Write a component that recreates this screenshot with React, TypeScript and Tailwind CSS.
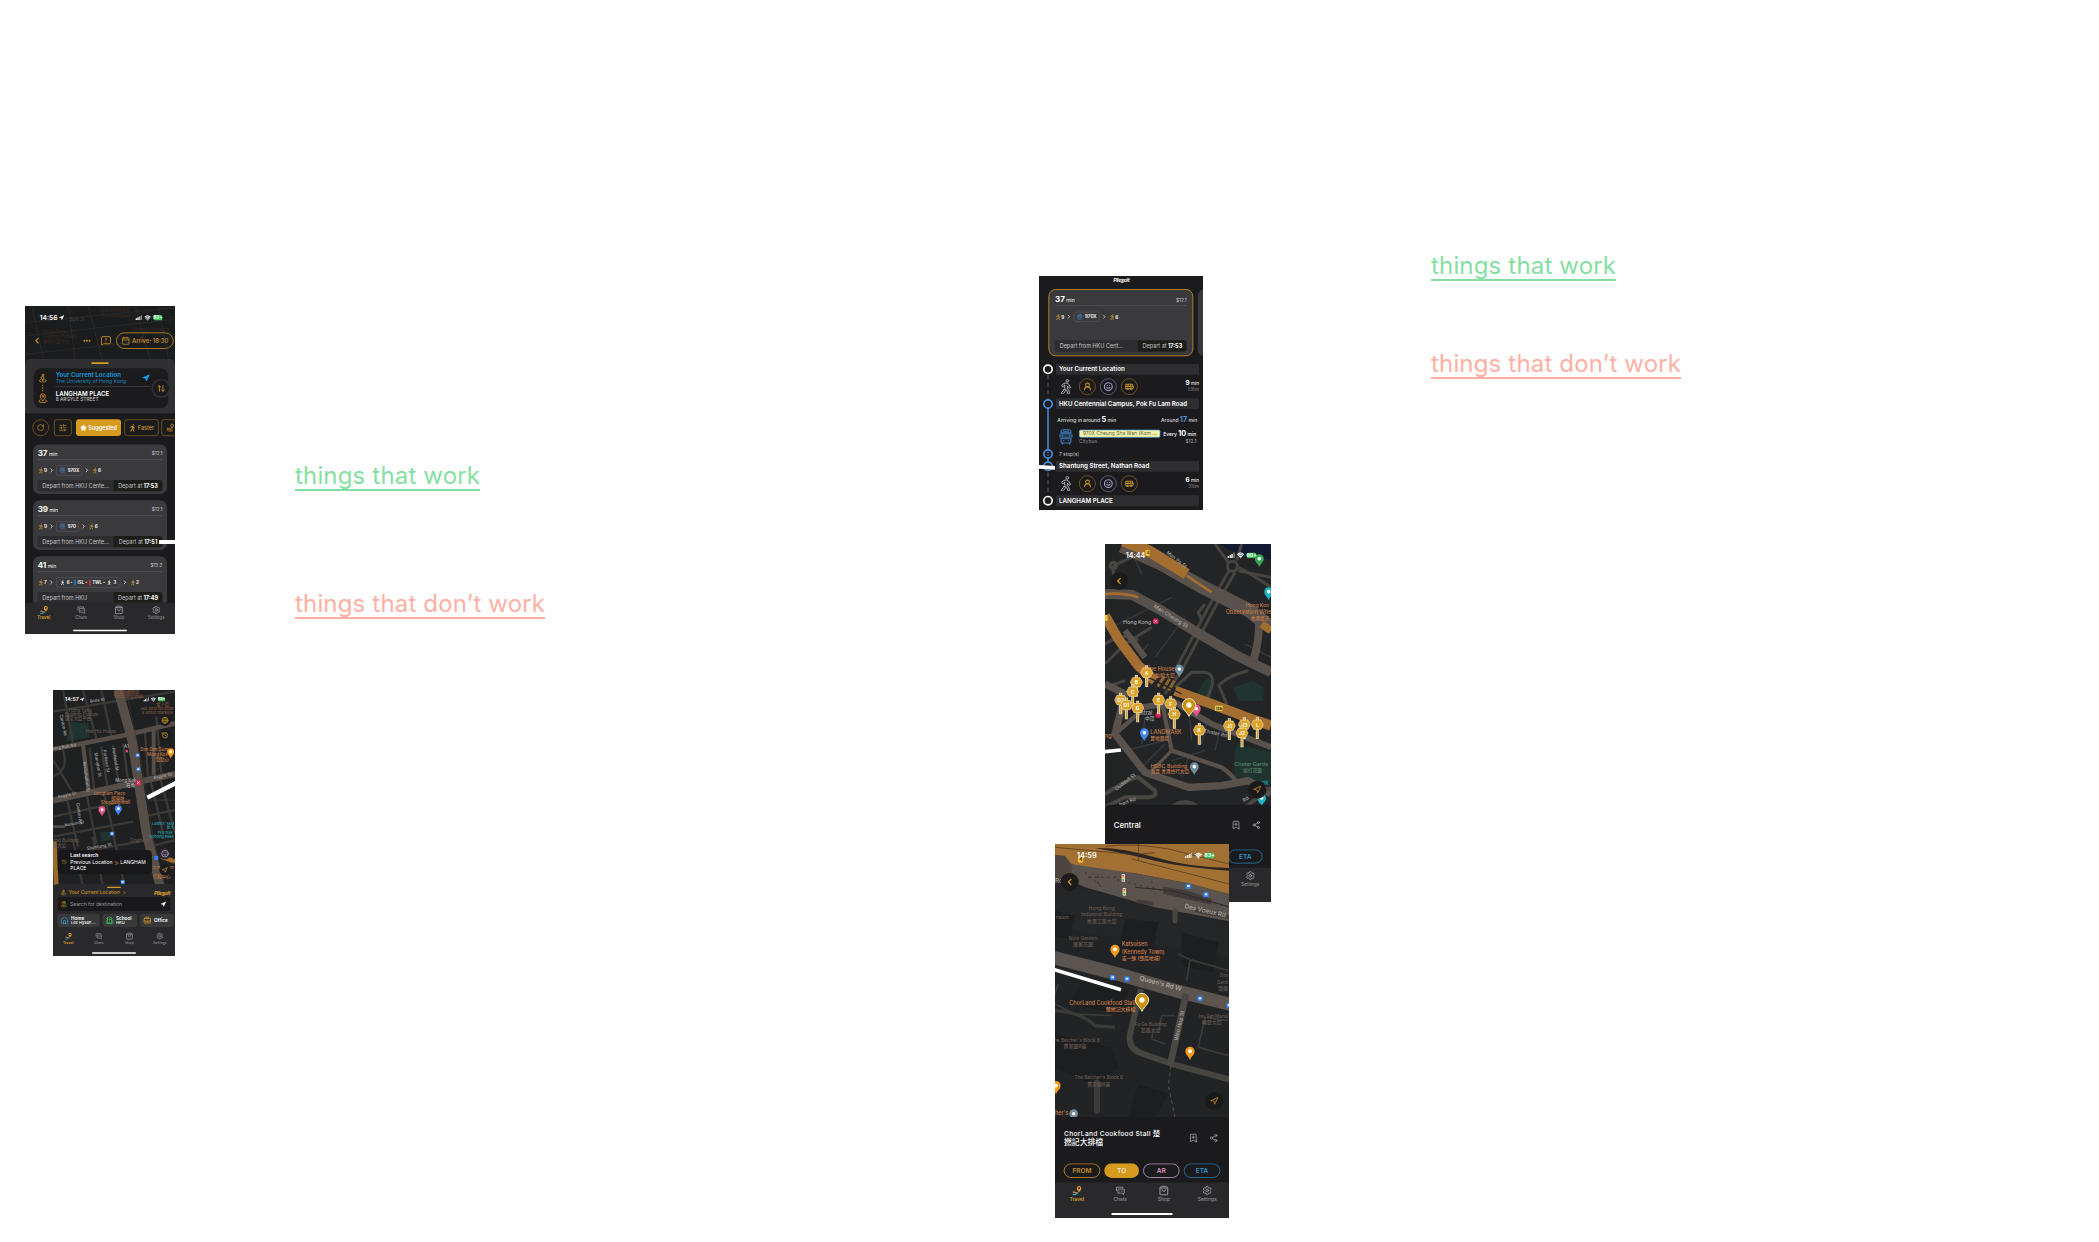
import React from "react";
import {
  ArrowRightLeft, BookmarkPlus, BriefcaseBusiness, Calendar, ChevronLeft, ChevronRight, Ellipsis,
  Globe, History, House, MessageSquareWarning, MessagesSquare, Navigation, RotateCw, School, Settings, Share2,
  ShoppingBag, SlidersHorizontal, Smile, Star, Wifi, Bus, UserRound,
} from "lucide-react";
import { FaWalking } from "react-icons/fa";

const FONT = "font-['Inter','Noto_Sans_CJK_TC',sans-serif]";

function Note({ className, children }: { className: string; children: React.ReactNode }) {
  return (
    <p className={`absolute whitespace-nowrap border-b-2 text-[24px] leading-[26px] font-[370] tracking-[0.17px] ${className}`}>
      {children}
    </p>
  );
}

function StatusBar({ time, battery, className, arrow = false }: { time: string; battery: string; className: string; arrow?: boolean }) {
  return (
    <div className={`flex h-[3.5em] items-center justify-between text-white ${className}`}>
      <div className="flex items-center gap-[0.2em] font-semibold">
        {time}
        {arrow && <Navigation className="size-[0.8em]" fill="currentColor" />}
      </div>
      <div className="flex items-center gap-[0.35em]">
        <div className="flex items-end gap-[0.08em]">
          <i className="h-[0.25em] w-[0.18em] bg-white" />
          <i className="h-[0.4em] w-[0.18em] bg-white" />
          <i className="h-[0.55em] w-[0.18em] bg-white" />
          <i className="h-[0.7em] w-[0.18em] bg-white/50" />
        </div>
        <Wifi className="size-[1em]" strokeWidth={3.6} />
        <div className="flex h-[0.8em] w-[1.4em] items-center justify-center rounded-[0.25em] bg-[#35c759] text-[0.95em] font-bold">
          <span className="text-[0.75em]">{battery}</span>
        </div>
      </div>
    </div>
  );
}

function TravelIcon() {
  return (
    <svg viewBox="0 0 28 28" className="size-[2.1em]" fill="none">
      <path d="M3 19q3-3 6 0t6 0" stroke="#e0a526" strokeWidth="3.2" />
      <path d="M3 25h6q3 0 4-2.500t5-2" stroke="#2ba9c4" strokeWidth="3.2" />
      <path d="M20 19c-4-5-6-7-6-11a6 6 0 0 1 12 0c0 4-2 6-6 11z" fill="#dfa02a" />
      <circle cx="20" cy="8" r="2.8" fill="#29292b" />
    </svg>
  );
}

function ChatsIcon() {
  return (
    <svg viewBox="0 0 28 28" className="size-[2.1em]" fill="none" stroke="currentColor" strokeWidth="2.2" strokeLinejoin="round">
      <path d="M4 16V5h17v3" />
      <path d="M8 10h17v11h-2v4l-4-4H8z" />
      <path d="M12 15.500h2M16 15.500h2M20 15.500h2" />
    </svg>
  );
}

function BottomNav({ className }: { className: string }) {
  return (
    <nav className={`flex h-[7.2em] shrink-0 flex-col justify-between bg-[#29292b] pt-[0.6em] pb-[0.62em] text-[#9d9da1] ${className}`}>
      <div className="grid grid-cols-4 leading-[1.5em]">
        <div className="flex flex-col items-center font-semibold text-[#d79c24]"><TravelIcon />Travel</div>
        <div className="flex flex-col items-center"><ChatsIcon />Chats</div>
        <div className="flex flex-col items-center"><ShoppingBag className="size-[2.1em]" strokeWidth={2.3} />Shop</div>
        <div className="flex flex-col items-center"><Settings className="size-[2.1em]" strokeWidth={2.1} />Settings</div>
      </div>
      <div className="mx-auto h-[0.42em] w-[12.4em] rounded-full bg-white" />
    </nav>
  );
}

function OriginIcon({ className }: { className: string }) {
  return (
    <svg viewBox="0 0 28 28" className={className} fill="none" stroke="currentColor" strokeWidth="2.4" strokeLinecap="round" strokeLinejoin="round">
      <circle cx="14" cy="4.5" r="2.8" />
      <path d="M10.5 10h7l-1 6h-1l-.5 5h-2l-.5-5h-1z" />
      <path d="M8 18c-7 2-6 7 6 7s13-5 6-7" />
    </svg>
  );
}

function TargetIcon({ className }: { className: string }) {
  return (
    <svg viewBox="0 0 28 28" className={className} fill="none" stroke="currentColor" strokeWidth="2.4" strokeLinecap="round" strokeLinejoin="round">
      <path d="M14 21c-5-6-7-8-7-12a7 7 0 0 1 14 0c0 4-2 6-7 12z" />
      <circle cx="14" cy="9" r="2.3" />
      <path d="M7 19c-7 2-5 7 7 7s14-5 7-7" />
    </svg>
  );
}

function BusFront({ className }: { className: string }) {
  return (
    <svg viewBox="0 0 40 48" className={className} fill="none" stroke="currentColor" strokeWidth="3.2">
      <path d="M9 42V47M31 42V47M1 16v9M39 16v9" />
      <rect x="5" y="2" width="30" height="40" rx="6" />
      <path d="M5 11H35M5 29H35M11 6.500H29" />
      <rect x="9" y="14" width="22" height="11" fill="currentColor" fillOpacity="0.35" strokeWidth="2" />
      <path d="M10 35h5M25 35h5" />
    </svg>
  );
}

function Walk({ n }: { n: string }) {
  return (
    <span className="flex items-center">
      <FaWalking className="size-[19px] text-[#b8872a]" />
      <b className="text-[14px]">{n}</b>
    </span>
  );
}

function Steps({ from, to, line }: { from: string; to: string; line?: string }) {
  return (
    <div className="flex h-[32px] items-center gap-[5px] text-[14px] whitespace-nowrap text-[#eee]">
      <Walk n={from} />
      <ChevronRight className="size-[18px]" strokeWidth={3} />
      {line ? (
        <span className="flex h-[31px] items-center gap-[6px] rounded-[6px] border-2 border-[#58585d] px-[7px] text-[13.5px] font-bold">
          <BusFront className="size-[19px] text-[#4a83bf]" />{line}
        </span>
      ) : (
        <span className="flex h-[31px] items-center gap-[5px] rounded-[6px] border-2 border-[#58585d] px-[10px] text-[13px] font-bold">
          <FaWalking className="size-[15px]" />6 • <i className="h-[17px] w-[5px] bg-[#1678c2]" /> ISL • <i className="h-[17px] w-[5px] bg-[#e0323c]" /> TWL • <FaWalking className="size-[15px]" />3
        </span>
      )}
      <ChevronRight className="size-[18px]" strokeWidth={3} />
      <Walk n={to} />
    </div>
  );
}

function TripCard({ min, price, place, depart, children, className }: {
  min: string; price: string; place: string; depart: string; children: React.ReactNode; className: string;
}) {
  return (
    <section className={`flex shrink-0 flex-col bg-[#3a3a3c] text-white ${className}`}>
      <div className="flex h-[36px] items-center justify-between border-b-2 border-[#555558]">
        <div className="text-[15px]"><b className="text-[24px]">{min}</b> min</div>
        <div className="text-[14px] text-[#ccc]">{price}</div>
      </div>
      <div className="mt-[16px] flex-1">{children}</div>
      <div className="flex h-[34px] items-center overflow-hidden rounded-[7px] bg-[#2d2d2f] text-[16.5px] text-[#c4c4c6]">
        <span className="flex-1 pl-[14px]">{place}</span>
        <span className="flex h-full w-[146px] items-center justify-center gap-[4px] bg-[#1d1d1a]">Depart at <b className="text-white">{depart}</b></span>
      </div>
    </section>
  );
}

function RoutesScreen() {
  return (
    <div className="flex h-[984px] w-[450px] origin-top-left scale-[0.33333] flex-col overflow-hidden bg-[#1b1b1d]">
      <div className="relative h-[158px] shrink-0 bg-[#1b1c1e]">
        <svg className="absolute inset-0" width="450" height="158" fill="none" stroke="#2b2928" strokeWidth="3">
          <path d="M0 50L450 5M0 90L450 40M20 0L55 158M130 0L150 158M190 0L230 158M330 0L375 158M400 0L430 158M0 145L450 95" />
          <g fill="#3b2b22" stroke="none" fontSize="13">
            <text x="225" y="15">朗豪坊購物商場</text><text x="230" y="32">Shopping mall</text>
            <text x="325" y="75">Hot spot for pubs</text><text x="55" y="80">Hong Tong</text><text x="55" y="95">Building Podium</text>
            <text x="55" y="110">康棠大廈平台</text><text x="135" y="45" fill="#444">Bute St</text>
          </g>
        </svg>
        <div className="relative">
          <StatusBar time="14:56" battery="82+" arrow className="pr-[38px] pl-[44px] text-[20px]" />
          <div className="flex items-center pt-[9px] pl-[22px] text-[#cf941f]">
            <ChevronLeft className="size-[28px]" strokeWidth={3} />
            <Ellipsis className="ml-[123px] size-[26px]" strokeWidth={3.4} />
            <MessageSquareWarning className="ml-[28px] size-[32px]" />
            <div className="ml-[14px] flex h-[50px] w-[173px] items-center justify-center gap-[6px] rounded-full border-[3px] border-[#a8781c] text-[18px] font-medium whitespace-nowrap">
              <Calendar className="size-[26px]" />Arrive: 18:30
            </div>
          </div>
        </div>
      </div>
      <div className="h-[164px] shrink-0 rounded-t-[18px] bg-[#303032] pt-[11px]">
        <div className="mx-auto h-[5px] w-[52px] rounded-full bg-[#d89a20]" />
        <div className="relative mx-[26px] mt-[13px] flex h-[120px] w-[404px] rounded-[24px] bg-[#1b1b1d]">
          <div className="flex w-[66px] flex-col items-center justify-center gap-[5px] pr-[12px] text-[#c98f22]">
            <OriginIcon className="size-[29px]" /><div className="h-[20px] border-l-4 border-dotted border-[#c98f22]" /><TargetIcon className="size-[31px]" />
          </div>
          <div className="flex-1 pt-[12px] leading-[17px] text-white">
            <div className="text-[18.5px] font-semibold text-[#109bdf]">Your Current Location</div>
            <div className="text-[15.5px] text-[#1785bd]">The University of Hong Kong</div>
            <div className="mt-[8px] mb-[11px] h-[2px] w-[285px] bg-[#444]" />
            <div className="text-[18.5px] font-semibold">LANGHAM PLACE</div>
            <div className="text-[14.5px] text-[#ccc]">8 ARGYLE STREET</div>
          </div>
          <Navigation className="absolute top-[17px] left-[325px] size-[24px] text-[#10a0ef]" fill="currentColor" />
          <div className="absolute top-[31px] left-[353px] flex size-[58px] items-center justify-center rounded-full border-[5px] border-[#303032] bg-[#1b1b1d] text-[#d09424]">
            <ArrowRightLeft className="size-[25px] rotate-90" strokeWidth={2.4} />
          </div>
        </div>
      </div>
      <div className="mt-[18px] ml-[22px] flex h-[50px] shrink-0 items-stretch text-[16.5px] font-medium text-[#c89126]">
        <div className="flex w-[50px] shrink-0 items-center justify-center rounded-full border-2 border-[#8d671f]"><RotateCw className="size-[24px]" /></div>
        <div className="ml-[15px] flex w-[53px] shrink-0 items-center justify-center rounded-[9px] border-2 border-[#8d671f]"><SlidersHorizontal className="size-[25px]" /></div>
        <div className="ml-[13px] flex w-[135px] shrink-0 items-center justify-center gap-[4px] rounded-[9px] bg-[#d69a1f] font-semibold text-white"><Star className="size-[21px]" fill="white" />Suggested</div>
        <div className="ml-[10px] flex w-[103px] shrink-0 items-center justify-center gap-[4px] rounded-[9px] border-2 border-[#8d671f]"><FaWalking className="size-[23px]" />Faster</div>
        <div className="ml-[8px] flex w-[100px] shrink-0 items-center rounded-[9px] border-2 border-[#8d671f] pl-[12px]">
          <svg viewBox="0 0 24 24" className="size-[26px]" fill="none" stroke="currentColor" strokeWidth="2.2"><circle cx="17" cy="6" r="4" /><path d="M17 10v6H8c-6 0-6 5-1 5h12M2 14h7" /></svg>
        </div>
      </div>
      <div className="mt-[25px] flex min-h-0 flex-1 flex-col gap-[19px] overflow-hidden px-[24px]">
        <TripCard min="37" price="$12.1" place="Depart from HKU Cente..." depart="17:53" className="h-[149px] rounded-[20px] px-[14px] pt-[10px] pb-[8px]"><Steps from="9" to="6" line="970X" /></TripCard>
        <TripCard min="39" price="$12.1" place="Depart from HKU Cente..." depart="17:51" className="h-[149px] rounded-[20px] px-[14px] pt-[10px] pb-[8px]"><Steps from="9" to="6" line="970" /></TripCard>
        <TripCard min="41" price="$13.2" place="Depart from HKU" depart="17:49" className="h-[149px] rounded-[20px] px-[14px] pt-[10px] pb-[8px]"><Steps from="7" to="2" /></TripCard>
      </div>
      <BottomNav className="text-[13px]" />
    </div>
  );
}

function HomeMap() {
  return (
    <svg className="absolute inset-0" width="366" height="590" fill="none" fontSize="13" fontWeight="500">
      <rect width="366" height="590" fill="#1e2022" />
      <path d="M55 95l50 5 5 40-70 15z" fill="#1f3430" /><path d="M140 425l30 0 5 25-30 5z" fill="#1f3430" />
      <g stroke="#3b3936" strokeWidth="7">
        <path d="M0 65L150 40L366 5M90 0L130 145M145 0L175 140M30 0L60 160M0 260Q50 240 30 180M0 210L55 300M110 175L125 315M145 170L165 305M180 165L200 300M210 160L228 290M0 380L230 330M40 320L75 470M100 310L130 460M150 300L185 440M0 440L240 395M0 500L260 455M60 450L90 590M120 440L150 590M180 430L215 590M275 115L285 260M310 80L325 250M290 260L330 430M320 260L366 430M270 380L366 360M290 470L366 450" />
        <path d="M285 265L366 190M290 330H366" strokeWidth="3" />
      </g>
      <g stroke="#574e47">
        <path d="M0 178L230 133L366 100" strokeWidth="14" /><path d="M0 332L366 252" strokeWidth="18" />
        <path d="M90 165L108 305" strokeWidth="12" /><path d="M195 0L237 150L280 430L325 600" strokeWidth="28" />
        <path d="M302 110V255" strokeWidth="12" /><path d="M0 410H35" strokeWidth="8" />
      </g>
      <path d="M4 455L10 590M325 500L366 515" stroke="#9c6a2b" strokeWidth="14" />
      <path d="M218 0L260 190L300 440L335 590" stroke="#3e3833" strokeWidth="2" />
      <g fill="#a9a9aa">
        <text x="112" y="38" transform="rotate(-8 112 38)">Bute St</text><text x="0" y="180" transform="rotate(-9 0 180)">ong Kok Rd</text>
        <text x="15" y="325" transform="rotate(-12 15 325)">Argyle St</text><text x="302" y="268" transform="rotate(-12 302 268)">Argyle St</text>
        <text x="20" y="75" transform="rotate(78 20 75)">Canton Rd</text><text x="90" y="215" transform="rotate(83 90 215)">Reclamation St</text>
        <text x="124" y="188" transform="rotate(80 124 188)">Shanghai St</text><text x="150" y="180" transform="rotate(80 150 180)">Portland St</text>
        <text x="177" y="175" transform="rotate(80 177 175)">Portland St</text><text x="70" y="340" transform="rotate(82 70 340)">Canton Rd</text>
        <text x="35" y="410" transform="rotate(-10 35 410)">Nelson St</text><text x="102" y="480" transform="rotate(-10 102 480)">Shantung St</text>
      </g>
      <g fill="#805640">
        <text x="182" y="13">朗豪坊購物商</text><text x="182" y="24">Shopping mall</text><text x="310" y="48">女人街</text><text x="263" y="60" fontSize="12">Hot spot for pubs</text>
        <text x="266" y="73" fontSize="12">&amp; street markets</text><text x="48" y="65" fill="#665c53">Hong Tong</text><text x="36" y="78" fill="#665c53">Building Podium</text><text x="36" y="91" fill="#665c53">康棠大廈平台</text>
        <text x="98" y="130" fill="#665c53">Hak Hoi House</text><text x="230" y="455" fill="#665c53">Cityplaza</text><text x="0" y="456" fill="#665c53">ong Building</text><text x="0" y="470" fill="#665c53">康大廈</text>
      </g>
      <g fill="#c47b49">
        <text x="262" y="183">Dim Dim Sum</text><text x="282" y="198">Mong Kok</text><text x="308" y="213">點點心</text>
        <text x="122" y="316">Langham Place</text><text x="175" y="330">朗豪坊</text><text x="143" y="343">Shopping mall</text>
        <text x="300" y="537" fontSize="12">CTMA Cen</text><text x="300" y="563">信和中心</text>
      </g>
      <g fill="#aaa"><text x="187" y="277">Mong Kok</text><text x="220" y="291">旺角</text><text x="213" y="175">A1</text></g>
      <g fill="#23a0ad" fontSize="12"><text x="297" y="405">Ladies' Mar</text><text x="340" y="418">女人</text><text x="314" y="431">Fee Bak</text><text x="289" y="444">Schong Bake</text></g>
      <g fill="#3c82ed"><rect x="248" y="190" width="12" height="12" rx="2" /><rect x="250" y="232" width="12" height="12" rx="2" /><rect x="171" y="425" width="12" height="12" rx="2" /><rect x="203" y="570" width="12" height="12" rx="2" /><rect x="304" y="498" width="12" height="12" rx="2" /></g>
      <g fill="#e8eef8"><rect x="251" y="193" width="6" height="5" /><rect x="253" y="235" width="6" height="5" /><rect x="174" y="428" width="6" height="5" /><rect x="206" y="573" width="6" height="5" /></g>
      <circle cx="256" cy="278" r="9" fill="#d21f54" /><path d="M252 274l8 8m0-8l-8 8" stroke="#fff" strokeWidth="2" /><rect x="218" y="180" width="7" height="7" fill="#e9417c" />
      <Pin x={147} y={364} s={0.95} fill="#e8558a" /><Pin x={196} y={361} s={0.95} fill="#4285f4" /><Pin x={353} y={190} s={0.95} fill="#f29a1d" />
      <path d="M283 323L375 276" stroke="#fff" strokeWidth="13" />
    </svg>
  );
}

function Pin({ x, y, s, fill }: { x: number; y: number; s: number; fill: string }) {
  return (
    <g transform={`translate(${x} ${y}) scale(${s})`}>
      <path d="M0 16C-3 7-11 4-11-5A11 11 0 0 1 11-5C11 4 3 7 0 16z" fill={fill} stroke="none" />
      <circle cy="-5" r="4.5" fill="#fff" stroke="none" />
    </g>
  );
}

function HomeScreen() {
  return (
    <div className="relative flex h-[798px] w-[366px] origin-top-left scale-[0.33333] flex-col overflow-hidden bg-[#29292b]">
      <div className="relative flex h-[582px] shrink-0 flex-col">
        <HomeMap />
        <div className="relative"><StatusBar time="14:57" battery="82+" arrow className="pr-[30px] pl-[36px] text-[16px]" /></div>
        <div className="relative mt-[18px] mr-[13px] flex flex-col items-end gap-[11px] text-[#b38324]">
          <div className="flex size-[34px] items-center justify-center rounded-full bg-[#1a1a1b]"><Globe className="size-[22px]" strokeWidth={2.8} /></div>
          <div className="flex size-[34px] items-center justify-center rounded-full bg-[#1a1a1b]"><History className="size-[22px]" strokeWidth={2.8} /></div>
        </div>
        <div className="relative mt-auto mb-[25px] flex items-center gap-[22px] pl-[14px]">
          <div className="flex h-[72px] w-[283px] items-center gap-[10px] rounded-[13px] bg-[#18181a] pl-[12px] text-[15px] leading-[19px] text-white">
            <History className="size-[16px] shrink-0 text-[#b6831f]" />
            <div><div className="font-semibold">Last search</div><div>Previous Location <span className="text-[#d99b20]">≫</span> LANGHAM</div><div>PLACE</div></div>
          </div>
          <div className="flex flex-col gap-[15px]">
            <div className="flex size-[34px] items-center justify-center rounded-full bg-[#29252f] text-[#a394bd]"><Smile className="size-[24px]" strokeWidth={3} /></div>
            <div className="flex size-[34px] items-center justify-center rounded-full bg-[#1a1a1b] text-[#d39520]"><Navigation className="size-[18px]" strokeWidth={2.5} /></div>
          </div>
        </div>
      </div>
      <div className="relative h-[139px] shrink-0 rounded-t-[14px] bg-[#29292b] px-[14px] pt-[8px] text-[15.5px]">
        <div className="mx-auto h-[4px] w-[42px] rounded-full bg-[#d89a20]" />
        <div className="flex h-[27px] items-center gap-[6px] pl-[8px] whitespace-nowrap text-[#c48e24]">
          <OriginIcon className="size-[19px]" /><span className="text-[14.6px] font-medium">Your Current Location</span><ChevronRight className="size-[16px]" strokeWidth={3} />
          <span className="ml-auto font-['Lato'] text-[18px] font-bold tracking-[-1px] text-[#e5a426] italic">Pliegoit</span>
        </div>
        <div className="flex h-[42px] items-center gap-[8px] rounded-[10px] bg-[#19191b] px-[8px] text-[15px] text-[#98989c]">
          <TargetIcon className="size-[21px] text-[#c48e24]" />Search for destination<Navigation className="mr-[4px] ml-auto size-[17px] text-white" fill="white" />
        </div>
        <div className="mt-[8px] flex h-[40px] gap-[9px] text-[14px] leading-[15px] font-semibold text-white">
          <div className="flex w-[126px] shrink-0 items-center gap-[7px] rounded-[9px] bg-[#39393b] pl-[8px]"><House className="size-[25px] text-[#3a8db9]" strokeWidth={2.4} /><div>Home<div className="text-[12px] font-medium">Lee Hysan ...</div></div></div>
          <div className="flex w-[104px] shrink-0 items-center gap-[7px] rounded-[9px] bg-[#39393b] pl-[8px]"><School className="size-[25px] text-[#3eb34c]" strokeWidth={2.4} /><div>School<div className="text-[12px] font-medium">HKU</div></div></div>
          <div className="flex w-[100px] shrink-0 items-center gap-[8px] rounded-[9px] bg-[#39393b] pl-[9px]"><BriefcaseBusiness className="size-[24px] text-[#d99b20]" strokeWidth={2.4} />Office</div>
        </div>
      </div>
      <BottomNav className="text-[10.7px]" />
    </div>
  );
}

function WalkRow({ min, dist }: { min: string; dist: string }) {
  return (
    <div className="flex h-[71px] items-center pr-[12px] pl-[8px] text-white">
      <FaWalking className="size-[44px] text-[#d3d3d5]" fill="none" stroke="#d3d3d5" strokeWidth="30" />
      <div className="ml-[17px] flex gap-[13px] text-[#bd8a25]">
        <div className="flex size-[50px] items-center justify-center rounded-full border-2 border-[#94691d]"><UserRound className="size-[27px]" strokeWidth={3} /></div>
        <div className="flex size-[50px] items-center justify-center rounded-full border-2 border-[#81769e] text-[#a69ac2]"><Smile className="size-[28px]" strokeWidth={3} /></div>
        <div className="flex size-[50px] items-center justify-center rounded-full border-2 border-[#94691d]"><Bus className="size-[27px]" strokeWidth={2.8} /></div>
      </div>
      <div className="ml-auto text-right text-[14px] leading-[18px]"><b className="text-[19px]">{min}</b> min<div className="text-[12.5px] text-[#9a9a9d]">{dist}</div></div>
    </div>
  );
}

function StopName({ children }: { children: React.ReactNode }) {
  return <div className="mr-[12px] flex h-[32px] items-center rounded-[3px] bg-[#2e2e30] pl-[9px] text-[18.6px] font-semibold whitespace-nowrap text-white">{children}</div>;
}

function DetailScreen() {
  return (
    <div className="relative flex h-[702px] w-[492px] origin-top-left scale-[0.33333] flex-col overflow-hidden bg-[#1b1b1d]">
      <div className="flex h-[39px] shrink-0 justify-center pl-[2px] font-['Lato'] text-[18px] leading-[20px] font-bold tracking-[-1px] text-white italic">Pliegoit</div>
      <div className="flex h-[202px] shrink-0 gap-[13px] pl-[28px]">
        <TripCard min="37" price="$12.1" place="Depart from HKU Cent..." depart="17:53" className="w-[435px] rounded-[22px] border-[3px] border-[#b07f20] px-[17px] pt-[12px] pb-[11px]"><Steps from="9" to="6" line="970X" /></TripCard>
        <div className="w-[30px] shrink-0 rounded-l-[22px] bg-[#39393b]" />
      </div>
      <div className="mt-[23px] flex">
        <svg width="51" height="438" className="shrink-0" fill="none" strokeWidth="5">
          <path d="M27 32V105M27 325V390" stroke="#4b4b4e" strokeWidth="4" strokeDasharray="13 10" />
          <path d="M27 120V305" stroke="#4085cf" />
          <g fill="#1b1b1d"><circle cx="27" cy="16" r="12.5" stroke="#fff" /><circle cx="27" cy="120" r="12.5" stroke="#4b8fda" /><circle cx="27" cy="270" r="12.5" stroke="#4b8fda" /><circle cx="27" cy="307" r="12.5" stroke="#4b8fda" /><circle cx="27" cy="410" r="12.5" stroke="#fff" /></g>
          <path d="M27 264v4M27 272v4" stroke="#4b8fda" strokeWidth="4" />
        </svg>
        <div className="flex-1">
          <StopName>Your Current Location</StopName>
          <WalkRow min="9" dist="535m" />
          <StopName>HKU Centennial Campus, Pok Fu Lam Road</StopName>
          <div className="flex h-[62px] items-center justify-between pr-[17px] pl-[4px] text-[15px] font-medium text-[#ddd]">
            <span>Arriving in around <b className="text-[22px] text-white">5</b> min</span>
            <span>Around <b className="text-[22px] text-[#4b8fda]">17</b> min</span>
          </div>
          <div className="flex h-[54px] items-start pl-[10px]">
            <BusFront className="-mt-[3px] h-[50px] w-[40px] text-[#3d7bbf]" />
            <div className="ml-[19px] text-[15px] text-[#8d8d90]">
              <div className="flex h-[24px] w-[244px] items-center justify-center rounded-[5px] border-2 border-[#4b9be0] bg-[#f5f2a7] text-[15px] whitespace-nowrap text-[#5d5f45]">970X Cheung Sha Wan (Kom ...</div>
              Citybus
            </div>
            <div className="ml-[1px] flex-1 pr-[20px] text-right text-[15px] leading-[22px] font-medium whitespace-nowrap text-white">Every <b className="text-[22px]">10</b> min<div className="text-[14px] text-[#a0a0a3]">$12.1</div></div>
          </div>
          <div className="h-[40px] pl-[9px] text-[14.5px] leading-[38px] text-[#ccc]">7 stop(s)</div>
          <StopName>Shantung Street, Nathan Road</StopName>
          <WalkRow min="6" dist="310m" />
          <StopName>LANGHAM PLACE</StopName>
        </div>
      </div>
      <svg className="absolute top-[564px] left-0" width="50" height="18"><path d="M0 3L48 6V17L0 14z" fill="#fff" /></svg>
    </div>
  );
}

const EXITS: [string, number, number][] = [
  ["D2", 47, 468], ["A", 125, 386], ["B", 94, 415], ["C", 83, 443], ["D1", 64, 483], ["G", 98, 492], ["E", 161, 468], ["F", 197, 479],
  ["H", 208, 511], ["K", 283, 559], ["J1", 373, 545], ["J3", 418, 542], ["L", 457, 542], ["J2", 411, 567],
];

function CentralMap() {
  return (
    <svg className="absolute inset-0" width="498" height="790" fill="none" fontSize="18" fontWeight="500">
      <rect width="498" height="790" fill="#222426" />
      <path d="M345 0H498V45Q410 45 345 0z" fill="#121a31" />
      <path d="M395 600L498 625V720L392 700Q380 650 395 600zM275 450l30-50 15 10 0 55zM385 430l60-20 30 20v40l-75 0z" fill="#20342f" />
      <g stroke="#45443f" strokeWidth="9">
        <path d="M390 85L330 190L230 380L180 450M375 75L310 190L215 370M400 80L498 100M370 55L330 0M395 50L410 0M400 70Q440 90 498 130M25 65V110M25 65L80 40M0 300Q60 260 100 290M0 360L60 300L140 250M0 430L60 410M210 430L260 385H300Q330 390 320 430L300 480M345 420Q380 390 430 380M340 420L365 480M300 180L280 205L290 230" />
        <circle cx="382" cy="67" r="15" /><circle cx="25" cy="65" r="10" />
      </g>
      <g stroke="#383a3a" strokeWidth="4">
        <path d="M70 0L110 90M130 300L90 350M240 220L150 340M0 260L200 160M180 480L200 560M250 480L260 590M310 520L290 600M350 530L330 620M50 300L80 360M120 520L110 600M420 300L498 340M60 620L180 590M180 600L100 680M250 640L230 700M200 650L300 620" />
      </g>
      <g stroke="#59514b" strokeLinejoin="round">
        <path d="M50 5L170 60L300 133L430 198L498 250" strokeWidth="42" /><path d="M0 150L80 152L170 200L270 262L390 332L498 385" strokeWidth="30" />
        <path d="M462 210Q465 290 445 350" strokeWidth="24" /><path d="M60 260L120 340M110 490L210 475L320 540L498 610" strokeWidth="18" />
        <path d="M0 420L60 450L40 530L30 570L120 685L250 730L350 725L430 710L498 750" strokeWidth="22" />
        <path d="M30 570L110 500M170 470L200 620L350 670Q380 690 400 720" strokeWidth="13" /><path d="M200 620L130 690" strokeWidth="10" />
        <path d="M0 750Q80 700 100 700L150 740Q160 760 120 760H60L0 790M200 790Q240 760 280 790M420 790L498 730" stroke="#494742" strokeWidth="12" />
      </g>
      <g stroke="#a36e30" strokeLinejoin="round">
        <path d="M55 -10L130 20L245 90" strokeWidth="34" /><path d="M245 95L320 145M0 150Q60 145 100 160" strokeWidth="8" />
        <path d="M0 215L40 285L100 365L150 410" strokeWidth="30" /><path d="M210 440L320 480L420 518L498 545" strokeWidth="30" /><path d="M470 240l28 20" strokeWidth="22" />
        <path d="M158 428l20-30M176 434l18-30M192 440l16-30" strokeWidth="9" stroke="#8a6230" />
      </g>
      <path d="M120 395L230 450" stroke="#222426" strokeWidth="4" />
      <g fill="#aaa8a5" fontSize="15">
        <text x="183" y="28" transform="rotate(38 183 28)">Man Po St</text><text x="145" y="190" transform="rotate(32 145 190)" fontSize="16">Man Cheung St</text>
        <text x="296" y="565" transform="rotate(12 296 565)">Chater Rd</text><text x="35" y="740" transform="rotate(-38 35 740)">Duddell St</text><text x="45" y="787" transform="rotate(-20 45 787)">bert Rd</text>
        <text x="418" y="775" transform="rotate(-38 418 775)">Rd</text>
      </g>
      <g fill="#aaa"><text x="54" y="239" fontSize="16">Hong Kong</text><text x="96" y="512" fontSize="17">entral</text><text x="120" y="528" fontSize="14">中環</text></g>
      <g fill="#c37a49" fontSize="16.5">
        <text x="422" y="190" fontSize="15">Hong Kon</text><text x="362" y="211">Observation Whe</text><text x="437" y="228" fontSize="14">香港摩天</text>
        <text x="95" y="380">Jardine House</text><text x="150" y="398" fontSize="15">怡和大廈</text>
        <text x="136" y="571">LANDMARK</text><text x="136" y="589" fontSize="14">置地廣場</text>
        <text x="137" y="671" fontSize="16">HSBC Building</text><text x="137" y="688" fontSize="14">滙豐 香港總行大廈</text><text x="0" y="583">ng</text>
      </g>
      <g fill="#58806b" fontSize="16"><text x="388" y="667">Chater Garde</text><text x="415" y="685" fontSize="14">遮打花園</text></g><text x="470" y="723" fill="#20a5b5">nk</text>
      <circle cx="152" cy="232" r="9" fill="#d21f54" /><path d="M148 228l8 8m0-8l-8 8" stroke="#fff" strokeWidth="2" /><circle cx="160" cy="513" r="9" fill="#d21f54" />
      <Pin x={223} y={381} s={1.2} fill="#718c9c" /><Pin x={118} y={572} s={1.2} fill="#4285f4" /><Pin x={268} y={674} s={1.2} fill="#718c9c" />
      <Pin x={491} y={149} s={1.2} fill="#20b4c7" /><Pin x={470} y={768} s={1.2} fill="#20b4c7" /><Pin x={274} y={500} s={1.2} fill="#e8558a" /><Pin x={463} y={50} s={1.2} fill="#34a853" />
      <g fontSize="11" fontWeight="700"><rect x="121" y="18" width="13" height="18" rx="2" fill="#ecc02f" /><text x="125" y="31" fill="#333">4</text><rect x="330" y="485" width="23" height="16" fill="#ecc945" /><text x="332" y="497" fill="#222">12A</text><rect x="0" y="213" width="8" height="18" fill="#ecc02f" /></g>
      {EXITS.map(([label, x, y]) => (
        <g key={label} transform={`translate(${x} ${y})`}>
          <path d="M0 -22V43" stroke="#e9dfc6" strokeWidth="9" /><path d="M0 -20V41" stroke="#d9a025" strokeWidth="4" />
          <path d="M-18 0L-11 -14H11L18 0L11 14H-11z" fill="#dca328" stroke="#f2ddb0" strokeWidth="2" />
          <text y="6" textAnchor="middle" fill="#fff" fontSize="15" fontWeight="700">{label}</text>
        </g>
      ))}
      <path d="M252 517C245 503 232 496 232 484A20 20 0 0 1 272 484C272 496 259 503 252 517z" fill="#c8920f" stroke="#f3e6c5" strokeWidth="3" /><circle cx="252" cy="483" r="8" fill="#fff" />
      <path d="M-2 623L48 618" stroke="#fff" strokeWidth="11" />
    </svg>
  );
}

function RoundBack() {
  return <div className="flex size-[54px] items-center justify-center rounded-full bg-[#1d1b19] text-[#dba021]"><ChevronLeft className="size-[32px]" strokeWidth={2.6} /></div>;
}

function PlaceActions() {
  return <div className="flex items-center gap-[33px] text-[#a4a4a7]"><BookmarkPlus className="size-[30px]" strokeWidth={1.9} /><Share2 className="size-[26px]" strokeWidth={2.1} /></div>;
}

function ActionButtons({ className }: { className: string }) {
  return (
    <div className={`flex text-[19.5px] font-semibold ${className}`}>
      <div className="flex flex-1 items-center justify-center rounded-full border-[3px] border-[#a8781c] text-[#c48e23]">FROM</div>
      <div className="flex flex-1 items-center justify-center rounded-full bg-[#d69a1f] text-[#f7e9cd]">TO</div>
      <div className="flex flex-1 items-center justify-center rounded-full border-[3px] border-[#a888b0] text-[#dc91bd]">AR</div>
      <div className="flex flex-1 items-center justify-center rounded-full border-[3px] border-[#24688f] text-[#2f93d0]">ETA</div>
    </div>
  );
}

function CentralScreen() {
  return (
    <div className="flex h-[1074px] w-[498px] origin-top-left scale-[0.33333] flex-col overflow-hidden bg-[#1b1b1d]">
      <div className="relative flex h-[790px] shrink-0 flex-col">
        <CentralMap />
        <div className="relative"><StatusBar time="14:44" battery="80+" className="h-[68px] pr-[44px] pl-[62px] text-[21.5px]" /></div>
        <div className="relative mt-[16px] ml-[15px]"><RoundBack /></div>
        <div className="relative mt-auto mr-[14px] mb-[26px] flex size-[54px] items-center justify-center self-end rounded-full bg-[#1a1a1b] text-[#d39520]"><Navigation className="size-[26px]" /></div>
      </div>
      <div className="relative -mt-[8px] flex h-[134px] shrink-0 items-center justify-between rounded-t-[12px] bg-[#1b1b1d] pr-[31px] pb-[12px] pl-[26px] text-[23.5px] font-medium text-white">Central<PlaceActions /></div>
      <ActionButtons className="mx-[25px] mb-[12px] h-[44px] gap-[12px]" />
      <BottomNav className="text-[14.3px]" />
    </div>
  );
}

function CookfoodMap() {
  return (
    <svg className="absolute inset-0" width="522" height="830" fill="none" fontSize="17" fontWeight="500">
      <rect width="522" height="830" fill="#212325" />
      <path d="M0 110L110 140L400 210L522 240V340L0 250z" fill="#252628" />
      <g fill="#1c1e20"><path d="M210 225l100 10-20 110-100-20zM380 265l110 30-15 90-95-20zM0 200l60 15-15 70-45-10zM90 400l130 40-30 70-150-30zM0 570l170 40 20 60-60 60-130-60zM250 720l90 30-40 69h-80z" /></g>
      <path d="M0 42L60 55L400 118L522 150V232L300 190L90 130L0 90z" fill="#5b534d" />
      <path d="M0 0H522V150L400 118L240 88L60 62L0 45z" fill="#a37033" />
      <path d="M0 32L30 35L50 62V90L0 110z" fill="#4c443d" />
      <path d="M120 12Q200 10 300 40T522 72V80Q380 70 290 48T120 12z" fill="#292523" /><path d="M150 8Q230 -5 340 15L522 60M230 45L522 120M0 10L240 32L300 26M250 0v50" stroke="#453321" strokeWidth="2" />
      <path d="M325 128L400 140L470 165V182L325 150zM245 165l50 8v12l-50-8zM420 193l102 20v12l-102-20z" fill="#423d3a" />
      <path d="M90 85L140 130M130 95V130M200 110L522 190M290 110L300 150M100 100h100M190 105v20" stroke="#393431" strokeWidth="3" strokeDasharray="7 12" />
      <path d="M240 130L350 140L522 188" stroke="#2f2b29" strokeWidth="3" />
      <path d="M360 200v30" stroke="#4a4743" strokeWidth="15" strokeLinecap="round" />
      <path d="M-5 340L200 393L380 445L530 482" stroke="#5c544e" strokeWidth="40" />
      <path d="M258 435L225 570Q218 615 260 628L360 663L530 708" stroke="#474540" strokeWidth="18" />
      <path d="M393 450L345 665" stroke="#4c4944" strokeWidth="20" />
      <path d="M348 665L340 725L360 819" stroke="#55504a" strokeWidth="3" strokeDasharray="11 10" />
      <path d="M312 560L320 515H360M330 600L290 585L295 560M370 330L405 347L522 380M430 610L450 520L522 530M430 610L522 635M405 350L395 410M0 480L60 510L170 515M0 450L10 420" stroke="#3b3b39" strokeWidth="5" />
      <path d="M126 715V800" stroke="#3b3b39" strokeWidth="18" strokeLinecap="round" /><path d="M0 500Q80 505 120 545L180 550" stroke="#3b3b39" strokeWidth="10" />
      <g fill="#b0aca8" fontSize="19">
        <text x="388" y="192" transform="rotate(13 388 192)">Des Voeux Rd</text><text x="253" y="408" transform="rotate(15 253 408)">Queen's Rd W</text>
        <text x="368" y="590" transform="rotate(-77 368 590)" fontSize="16">Woo Hop St</text><text x="0" y="117">Rd</text>
      </g>
      <g fill="#685b50" fontSize="15" textAnchor="middle">
        <text x="140" y="197">Hong Kong</text><text x="140" y="217" fontSize="14.5">Industrial Building</text><text x="140" y="236">香港工業大廈</text><text x="84" y="289" fontSize="14.5">Nice Garden</text><text x="84" y="307">居家花園</text>
        <text x="22" y="224">nsion</text><text x="287" y="546" fontSize="14">Fu Ga Building</text><text x="287" y="564">富基大廈</text><text x="474" y="521" fontSize="14">Joy Fat Mansi</text><text x="470" y="541">再發大廈</text>
        <text x="66" y="593" fontSize="14">he Belcher's Block 8</text><text x="60" y="613">寶翠園8座</text><text x="131" y="705" fontSize="14">The Belcher's Block 6</text><text x="131" y="725">寶翠園6座</text>
        <text x="507" y="400" fontSize="14">Dra</text><text x="502" y="419" fontSize="14">Gard</text><text x="504" y="437">龍輝</text>
      </g>
      <g fill="#cc7f49" fontSize="16.5">
        <text x="200" y="307">Katsuisen</text><text x="200" y="330" fontSize="16.5">(Kennedy Town)</text><text x="200" y="349" fontSize="14.5">吉一鮮 (堅尼地城)</text>
        <text x="43" y="482">ChorLand Cookfood Stall</text><text x="152" y="501" fontSize="15">楚撚記大排檔</text><text x="0" y="813">her's</text>
      </g>
      {[[400, 127], [453, 152], [173, 401], [216, 405], [435, 464], [522, 484]].map(([x, y]) => (
        <g key={x}><rect x={x - 8} y={y - 8} width="16" height="16" rx="3" fill="#2f7ff0" /><rect x={x - 4} y={y - 4} width="8" height="6" fill="#e8f0ff" /></g>
      ))}
      {[[205, 101], [208, 143]].map(([x, y]) => (
        <g key={x}><rect x={x - 5} y={y - 11} width="10" height="23" rx="2" fill="#eee5d2" /><circle cx={x} cy={y - 6} r="3" fill="#e23b32" /><circle cx={x} cy={y} r="3" fill="#eab530" /><circle cx={x} cy={y + 7} r="3" fill="#35a853" /></g>
      ))}
      <rect x="69" y="37" width="16" height="19" rx="4" fill="#f0c02b" /><text x="73" y="52" fontSize="14" fontWeight="700" fill="#333">4</text>
      <Pin x={180} y={322} s={1.25} fill="#f29a1d" /><Pin x={405} y={628} s={1.25} fill="#f29a1d" /><Pin x={3} y={731} s={1.25} fill="#f29a1d" />
      <circle cx="56" cy="809" r="13" fill="#718c9c" /><circle cx="56" cy="809" r="5" fill="#fff" />
      <path d="M261 502C254 487 241 480 241 468A20 20 0 0 1 281 468C281 480 268 487 261 502z" fill="#c8920f" stroke="#f3e6c5" strokeWidth="3" /><circle cx="261" cy="468" r="8" fill="#fff" />
      <path d="M-5 376L198 437" stroke="#fff" strokeWidth="11" />
    </svg>
  );
}

function CookfoodScreen() {
  return (
    <div className="flex h-[1122px] w-[522px] origin-top-left scale-[0.33333] flex-col overflow-hidden bg-[#1b1b1d]">
      <div className="relative flex h-[826px] shrink-0 flex-col">
        <CookfoodMap />
        <div className="relative"><StatusBar time="14:59" battery="83+" className="h-[69px] pr-[44px] pl-[66px] text-[22px]" /></div>
        <div className="relative mt-[18px] ml-[17px]"><RoundBack /></div>
        <div className="relative mt-auto mr-[17px] mb-[28px] flex size-[54px] items-center justify-center self-end rounded-full bg-[#1a1a1b] text-[#d39520]"><Navigation className="size-[26px]" /></div>
      </div>
      <div className="relative -mt-[7px] flex h-[139px] shrink-0 items-center justify-between rounded-t-[12px] bg-[#1b1b1d] pr-[33px] pb-[14px] pl-[27px] text-[20px] leading-[28px] font-medium whitespace-nowrap text-white">
        <div><span className="tracking-[0.9px]">ChorLand Cookfood Stall </span><span className="text-[22px]">楚</span><br /><span className="text-[23.5px]">撚記大排檔</span></div><PlaceActions />
      </div>
      <ActionButtons className="mx-[26px] mb-[13px] h-[46px] gap-[12px]" />
      <BottomNav className="text-[14.8px]" />
    </div>
  );
}

export default function App() {
  return (
    <main className={`relative h-[1242px] w-[2099px] overflow-hidden bg-white ${FONT}`}>
      <div className="absolute top-[306px] left-[25px] h-[328px] w-[150px] overflow-hidden"><RoutesScreen /></div>
      <div className="absolute top-[540px] left-[159px] h-[4px] w-[20px] bg-white" />
      <div className="absolute top-[690px] left-[53px] h-[266px] w-[122px] overflow-hidden"><HomeScreen /></div>
      <div className="absolute top-[276px] left-[1039px] h-[234px] w-[164px] overflow-hidden"><DetailScreen /></div>
      <div className="absolute top-[544px] left-[1105px] h-[358px] w-[166px] overflow-hidden"><CentralScreen /></div>
      <div className="absolute top-[844px] left-[1055px] h-[374px] w-[174px] overflow-hidden"><CookfoodScreen /></div>
      <Note className="top-[463px] left-[295px] border-[#86dfa2] text-[#86dfa2]">things that work</Note>
      <Note className="top-[591px] left-[295px] border-[#ffb0a4] text-[#ffb0a4]">things that don’t work</Note>
      <Note className="top-[253px] left-[1431px] border-[#86dfa2] text-[#86dfa2]">things that work</Note>
      <Note className="top-[351px] left-[1431px] border-[#ffb0a4] text-[#ffb0a4]">things that don’t work</Note>
    </main>
  );
}
